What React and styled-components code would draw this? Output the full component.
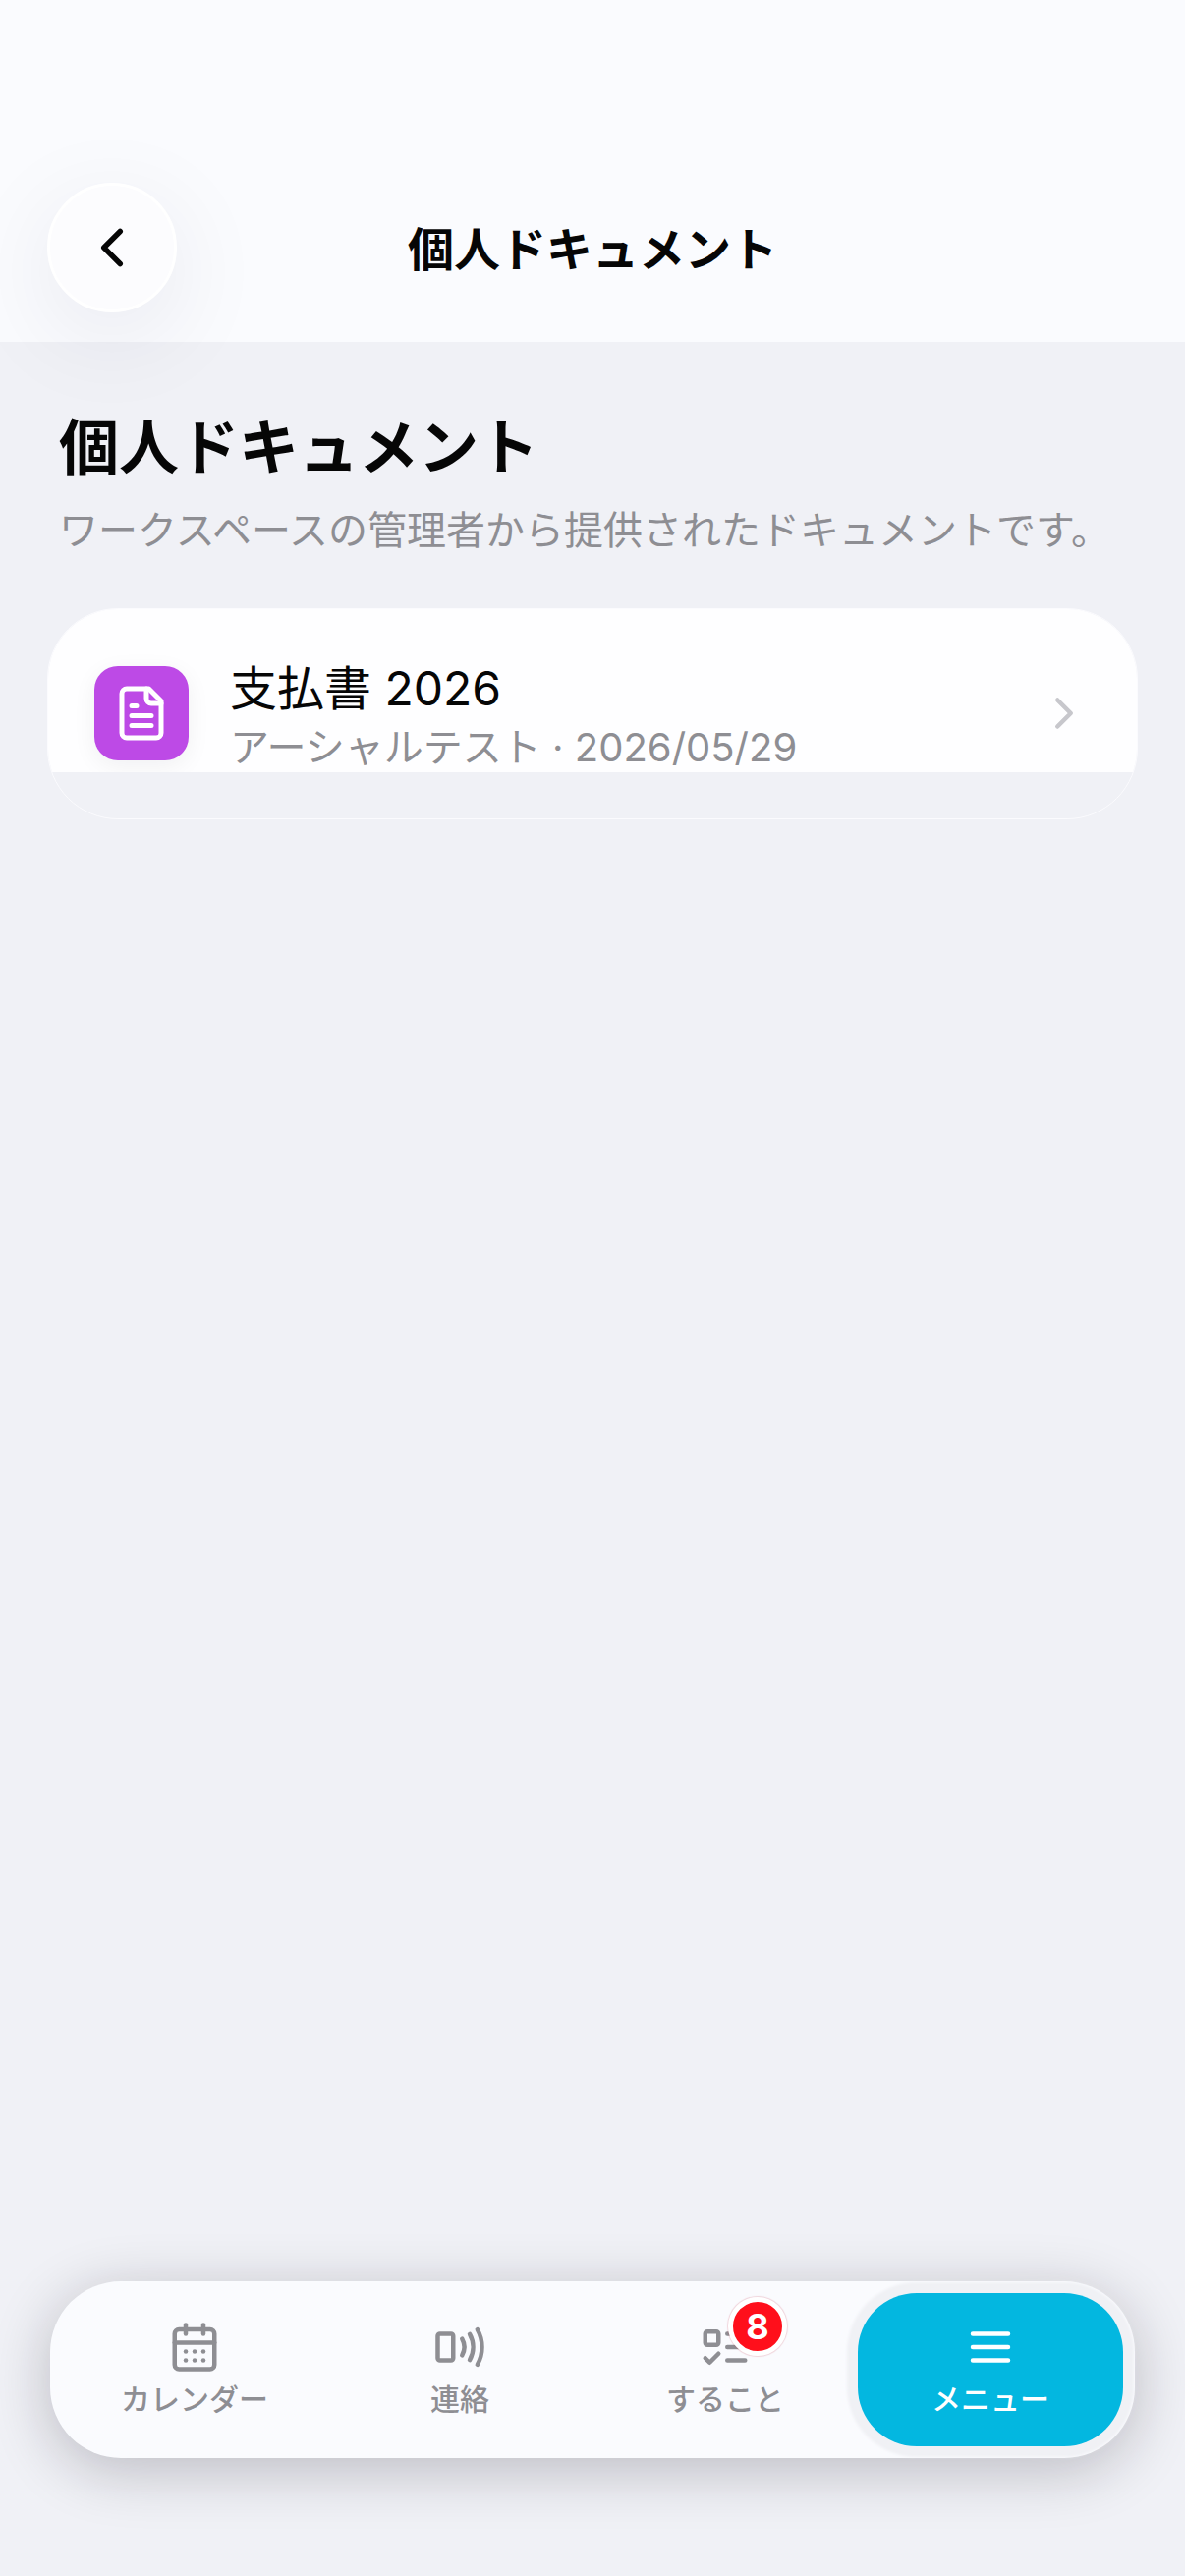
import React from 'react';
import styled, { createGlobalStyle } from 'styled-components';
import { CalendarDays, ChevronLeft, ChevronRight, SmartphoneNfc } from 'lucide-react';

const GlobalStyle = createGlobalStyle`
    *, *::before, *::after {
        box-sizing: border-box;
    }
    body {
        margin: 0;
        background: #f0f1f6;
        color: #060606;
        font-family: Inter, "Noto Sans CJK JP", sans-serif;
    }
    h1, h2, p {
        margin: 0;
    }
`;

const Page = styled.div`
    min-height: 100vh;
    display: flex;
    flex-direction: column;
`;

const Header = styled.header`
    padding: 186px 48px 30px;
    display: grid;
    grid-template-columns: 132px 1fr 132px;
    align-items: center;
    background: #fafbfe;
`;
const BackButton = styled.button`
    width: 132px;
    height: 132px;
    padding: 0;
    display: grid;
    place-items: center;
    color: #060606;
    background: #fcfcfe;
    border: 3px solid white;
    border-radius: 50%;
    box-shadow: 0 24px 100px rgba(20, 24, 60, 0.08);
    cursor: pointer;
`;
const HeaderTitle = styled.p`
    padding-top: 3px;
    font-size: 47px;
    font-weight: 600;
    line-height: 60px;
    text-align: center;
`;

const Content = styled.main`
    padding: 72px 48px 48px;
`;
const Intro = styled.div`
    padding: 0 12px;
    margin-bottom: 49px;
    display: grid;
    gap: 18px;
`;
const Title = styled.h1`
    font-size: 61px;
    font-weight: 700;
    line-height: 72px;
`;
const Lead = styled.p`
    color: #8e8e93;
    font-size: 40px;
    line-height: 60px;
`;

const Card = styled.section`
    padding-bottom: 47px;
    overflow: hidden;
    border: 1px solid #fbfbfe;
    border-radius: 72px;
`;
const DocumentLink = styled.a`
    padding: 58px 47px 12px;
    display: flex;
    align-items: center;
    gap: 42px;
    overflow: hidden;
    background: #fefeff;
    color: inherit;
    text-decoration: none;
`;
const IconTile = styled.span`
    width: 96px;
    height: 96px;
    flex: none;
    display: grid;
    place-items: center;
    color: white;
    background: #bd4ae6;
    border-radius: 24px;
    box-shadow: 0 6px 24px rgba(0, 0, 30, 0.06);
`;
const DocumentText = styled.span`
    flex: 1;
    height: 96px;
    padding-top: 3px;
    display: flex;
    flex-direction: column;
    justify-content: center;
`;
const DocumentName = styled.span`
    font-size: 48px;
    line-height: 66px;
`;
const DocumentMeta = styled.span`
    color: #8e8e93;
    font-size: 40px;
    line-height: 54px;
`;

const TabBar = styled.nav`
    margin: auto 51px 120px;
    padding: 12px;
    display: grid;
    grid-template-columns: repeat(4, 1fr);
    background: #fafbfe;
    border-radius: 72px;
    box-shadow: 0 12px 60px rgba(20, 16, 30, 0.24);
`;
const Tab = styled.a`
    height: 156px;
    padding-top: 28px;
    display: flex;
    flex-direction: column;
    align-items: center;
    gap: 6px;
    color: ${props => (props.$active ? 'white' : '#8e8e93')};
    background: ${props => (props.$active ? '#03b7e0' : 'transparent')};
    border-radius: 60px;
    box-shadow: ${props => (props.$active ? '0 0 3px 11px #f0f1f5' : 'none')};
    text-decoration: none;
`;
const TabIcon = styled.span`
    position: relative;
    display: grid;
`;
const TabLabel = styled.span`
    font-size: 30px;
    font-weight: 500;
    line-height: 40px;
`;
const Badge = styled.span`
    position: absolute;
    top: -24px;
    left: 30px;
    width: 60px;
    height: 60px;
    display: grid;
    place-items: center;
    color: white;
    background: #ff0f1b;
    border: 5px solid white;
    border-radius: 50%;
    box-shadow: 0 0 1px 1px rgba(200, 60, 80, 0.2);
    font-size: 36px;
    font-weight: 700;
    line-height: 48px;
`;

const Icon = ({ size, children }) => (
  <svg
    width={size}
    height={size}
    viewBox="0 0 24 24"
    fill="none"
    stroke="currentColor"
    strokeWidth="2"
    strokeLinecap="round"
    strokeLinejoin="round"
    aria-hidden="true"
  >
    {children}
  </svg>
);

const DocumentIcon = () => (
  <Icon size={60}>
    <path d="M15 2H6a2 2 0 0 0-2 2v16a2 2 0 0 0 2 2h12a2 2 0 0 0 2-2V7Z" />
    <path d="M14 2v4a2 2 0 0 0 2 2h4" />
    <path d="M10 9H8M16 13H8M16 17H8" />
  </Icon>
);

const TodoIcon = () => (
  <Icon size={54}>
    <rect x="3" y="5" width="6" height="6" rx="1" />
    <path d="m3 17 2 2 4-4" />
    <path d="M13 6h8M13 12h8M13 18h8" />
  </Icon>
);

const MenuIcon = () => (
  <Icon size={54}>
    <path d="M4 6h16M4 12h16M4 18h16" />
  </Icon>
);

const tabs = [
  { label: 'カレンダー', href: '#calendar', icon: <CalendarDays size={54} /> },
  { label: '連絡', href: '#contact', icon: <SmartphoneNfc size={54} /> },
  { label: 'すること', href: '#todo', icon: <TodoIcon />, badge: 8 },
  { label: 'メニュー', href: '#menu', icon: <MenuIcon />, active: true },
];

const App = () => (
  <Page>
    <GlobalStyle />
    <Header>
      <BackButton type="button" aria-label="戻る">
        <ChevronLeft size={66} />
      </BackButton>
      <HeaderTitle>個人ドキュメント</HeaderTitle>
    </Header>
    <Content>
      <Intro>
        <Title>個人ドキュメント</Title>
        <Lead>ワークスペースの管理者から提供されたドキュメントです。</Lead>
      </Intro>
      <Card>
        <DocumentLink href="#document">
          <IconTile><DocumentIcon /></IconTile>
          <DocumentText>
            <DocumentName>支払書 2026</DocumentName>
            <DocumentMeta>アーシャルテスト · 2026/05/29</DocumentMeta>
          </DocumentText>
          <ChevronRight size={54} color="#c7c7cc" />
        </DocumentLink>
      </Card>
    </Content>
    <TabBar>
      {tabs.map(tab => (
        <Tab
          key={tab.label}
          href={tab.href}
          $active={tab.active}
          aria-current={tab.active ? 'page' : undefined}
        >
          <TabIcon>
            {tab.icon}
            {tab.badge && <Badge>{tab.badge}</Badge>}
          </TabIcon>
          <TabLabel>{tab.label}</TabLabel>
        </Tab>
      ))}
    </TabBar>
  </Page>
);
export default App;
